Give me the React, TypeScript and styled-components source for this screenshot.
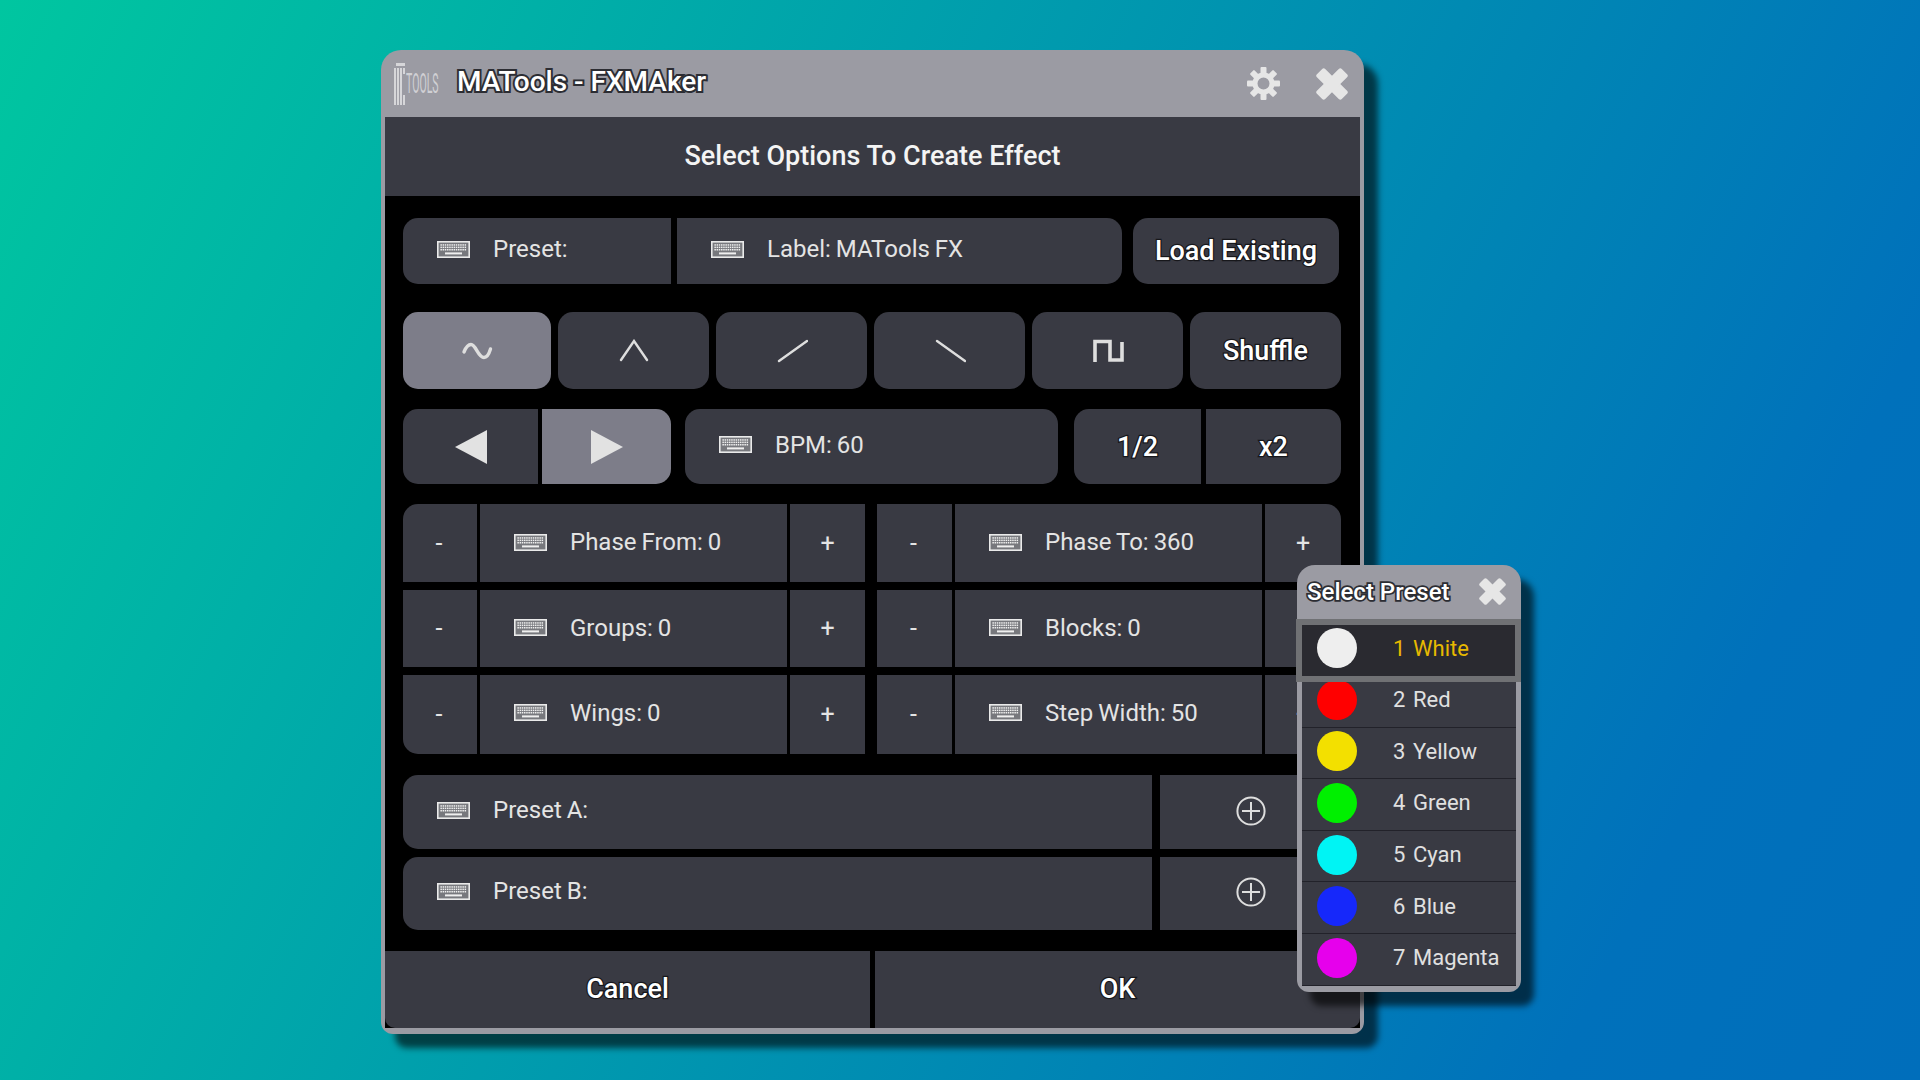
import React from "react";
import styled, { createGlobalStyle } from "styled-components";

const GlobalStyle = createGlobalStyle`
  html, body {
    margin: 0;
    padding: 0;
    width: 1920px;
    height: 1080px;
    overflow: hidden;
    font-family: Roboto, "Liberation Sans", sans-serif;
  }
`;

const PANEL = "#393a43";
const ACTIVE = "#7d7d89";
const FRAME = "#9b9ba3";
const LIGHT = "#e2e2e2";

const Keyboard = () => {
  const dots: React.ReactNode[] = [];
  for (let r = 0; r < 3; r++) {
    for (let c = 0; c < 12; c++) {
      dots.push(<rect key={r + "-" + c} x={3.4 + c * 2.2} y={3.2 + r * 2.4} width={1.5} height={1.5} fill="#efefef" />);
    }
  }
  return (
    <svg width="33" height="17" viewBox="0 0 33 17" style={{ flex: "none" }}>
      <rect x="0.8" y="0.8" width="31.4" height="15.4" fill="#77787d" stroke="#eaeaea" strokeWidth="1.6" />
      {dots}
      <rect x="8" y="11.4" width="17" height="2" fill="#efefef" />
    </svg>
  );
};

const LogoMark = styled.div`
  display: flex;
  align-items: center;
  width: 46px;
  height: 44px;
  flex: none;
`;

const LogoWord = styled.span`
  display: block;
  width: 32px;
  white-space: nowrap;
  font-size: 27px;
  line-height: 28px;
  color: #d0d0d4;
  transform: scaleX(0.39);
  transform-origin: left center;
`;

const Logo = () => (
  <LogoMark>
    <svg width="12" height="44" viewBox="0 0 12 44" style={{ flex: "none" }}>
      <g fill="#d6d6d9">
        <rect x="0" y="6" width="2" height="37" />
        <rect x="3" y="6" width="2" height="37" />
        <rect x="6" y="6" width="2" height="37" />
        <rect x="9" y="6" width="2" height="6" />
        <rect x="9" y="33" width="2" height="10" />
        <rect x="2" y="1" width="9" height="3" />
      </g>
    </svg>
    <LogoWord>TOOLS</LogoWord>
  </LogoMark>
);

const Gear = () => (
  <svg width="33" height="33" viewBox="0 0 33 33">
    <g fill="#e6e6e6">
      {[0, 45, 90, 135, 180, 225, 270, 315].map((a) => (
        <rect key={a} x="13.5" y="0" width="6" height="7" rx="1" transform={`rotate(${a} 16.5 16.5)`} />
      ))}
    </g>
    <circle cx="16.5" cy="16.5" r="8.5" fill="none" stroke="#e6e6e6" strokeWidth="5" />
  </svg>
);

const CloseX = ({ size }: { size: number }) => (
  <svg width={size} height={size} viewBox="0 0 30 30">
    <g fill="#e6e6e6">
      <rect x="-1.5" y="9.5" width="33" height="11" rx="2" transform="rotate(45 15 15)" />
      <rect x="-1.5" y="9.5" width="33" height="11" rx="2" transform="rotate(-45 15 15)" />
    </g>
  </svg>
);

const waves: Record<string, { d: string; w: number }> = {
  sine: { d: "M3 13C5 8 7 5.5 10 5.5C15 5.5 17 18.5 23 18.5C26 18.5 28 15 29.5 10", w: 3.4 },
  triangle: { d: "M3 21L16 2L29 21", w: 2.4 },
  up: { d: "M3 22L31 2", w: 2.4 },
  down: { d: "M3 2L31 22", w: 2.4 },
  square: { d: "M3 23V2.5H18V21H30V3", w: 3.6 },
};

const Wave = ({ kind }: { kind: string }) => (
  <svg width="32" height="24" viewBox="0 0 32 24" fill="none" stroke="#dedede" strokeWidth={waves[kind].w} strokeLinecap={kind === "square" ? "butt" : "round"}>
    <path d={waves[kind].d} />
  </svg>
);

const Arrow = ({ left }: { left?: boolean }) => (
  <svg width="32" height="34" viewBox="0 0 32 34">
    <polygon points={left ? "32,0 32,34 0,17" : "0,0 0,34 32,17"} fill={LIGHT} />
  </svg>
);

const PlusCircle = () => (
  <svg width="30" height="30" viewBox="0 0 30 30" fill="none" stroke="#dedede" strokeWidth="2">
    <circle cx="15" cy="15" r="13.6" />
    <path d="M15 6V24M6 15H24" />
  </svg>
);

const Stage = styled.div`
  position: relative;
  width: 1920px;
  height: 1080px;
  box-sizing: border-box;
  padding: 50px 0 0 381px;
  background: linear-gradient(116deg, #00c6a0 0%, #0071bb 85%, #006ebb 100%);
`;

const Window = styled.div`
  width: 983px;
  box-sizing: border-box;
  padding: 0 4px 6px;
  background: ${FRAME};
  border-radius: 20px 20px 12px 12px;
  box-shadow: 14px 14px 6px rgba(0, 0, 0, 0.6);
`;

const TitleBar = styled.div`
  height: 67px;
  display: flex;
  align-items: center;
  padding: 0 12px 0 9px;
`;

const WindowTitle = styled.div`
  margin-left: 17px;
  padding-bottom: 5px;
  flex: 1;
  font-size: 28px;
  font-weight: 500;
  color: #fff;
  -webkit-text-stroke: 4px #2c2d33;
  paint-order: stroke fill;
`;

const TitleIcons = styled.div`
  display: flex;
  align-items: center;
  gap: 36px;
`;

const Header = styled.div`
  height: 79px;
  box-sizing: border-box;
  padding-bottom: 2px;
  background: ${PANEL};
  display: flex;
  align-items: center;
  justify-content: center;
  color: #f4f4f4;
  font-size: 27px;
  font-weight: 500;
`;

const Body = styled.div`
  background: #000;
  padding: 22px 19px 21px 18px;
`;

const Row = styled.div<{ $h: number; $top?: number; $gap?: number }>`
  display: flex;
  height: ${(p) => p.$h}px;
  margin-top: ${(p) => p.$top || 0}px;
  gap: ${(p) => p.$gap || 0}px;
`;

const Cell = styled.div<{ $w?: number; $r?: string; $on?: boolean; $mr?: number; $pb?: number }>`
  flex: ${(p) => (p.$w ? "none" : 1)};
  width: ${(p) => (p.$w ? p.$w + "px" : "auto")};
  margin-right: ${(p) => p.$mr || 0}px;
  padding-bottom: ${(p) => p.$pb || 0}px;
  box-sizing: border-box;
  display: flex;
  align-items: center;
  justify-content: center;
  background: ${(p) => (p.$on ? ACTIVE : PANEL)};
  border-radius: ${(p) => p.$r || "0"};
`;

const Field = styled(Cell)`
  justify-content: flex-start;
  padding-left: 34px;
  gap: 23px;
  color: #e4e4e4;
  font-size: 24px;
  word-spacing: -1px;
`;

const Action = styled(Cell)`
  color: #fff;
  font-size: 27px;
  font-weight: 500;
  -webkit-text-stroke: 2.5px #17171b;
  paint-order: stroke fill;
`;

const Step = styled(Cell)`
  color: #e4e4e4;
  font-size: 25px;
`;

const Minus = styled(Step)`
  padding-right: 2px;
`;

const Footer = styled.div`
  display: flex;
  gap: 5px;
  background: #000;
`;

const FooterButton = styled(Action)`
  height: 77px;
`;

const Popup = styled.div`
  position: absolute;
  left: 1297px;
  top: 565px;
  width: 224px;
  box-sizing: border-box;
  padding: 0 5px 6px;
  background: ${FRAME};
  border-radius: 18px 18px 12px 12px;
  box-shadow: 13px 14px 6px rgba(0, 0, 0, 0.6);
`;

const PopupTitleBar = styled.div`
  height: 53px;
  display: flex;
  align-items: center;
  justify-content: space-between;
  padding: 0 10px 1px 5px;
`;

const PopupTitle = styled.div`
  font-size: 24px;
  font-weight: 500;
  color: #fff;
  -webkit-text-stroke: 3.5px #2c2d33;
  paint-order: stroke fill;
`;

const PresetRow = styled.div<{ $selected?: boolean }>`
  position: relative;
  display: flex;
  align-items: center;
  box-sizing: border-box;
  height: ${(p) => (p.$selected ? 63 : 51.6)}px;
  padding: 0 0 ${(p) => (p.$selected ? 5 : 3)}px 15px;
  background: ${(p) => (p.$selected ? "#2a2a30" : PANEL)};
  margin: ${(p) => (p.$selected ? "0 -5px -6px -6px" : "0")};
  z-index: ${(p) => (p.$selected ? 1 : 0)};
  border: ${(p) => (p.$selected ? "6px solid #707174" : "0")};
  border-bottom: ${(p) => (p.$selected ? "6px solid #707174" : "1.5px solid #22222a")};
  color: ${(p) => (p.$selected ? "#e7b900" : "#e0e0e0")};
  font-size: 22px;
`;

const Dot = styled.span<{ $color: string }>`
  width: 40px;
  height: 40px;
  flex: none;
  border-radius: 50%;
  background: ${(p) => p.$color};
`;

const PresetNumber = styled.span`
  width: 20px;
  margin-left: 36px;
  text-align: left;
`;

const params = [
  { h: 78, top: 20, pb: 2, left: "Phase From: 0", right: "Phase To: 360" },
  { h: 77, top: 8, pb: 2, left: "Groups: 0", right: "Blocks: 0" },
  { h: 79, top: 8, pb: 4, left: "Wings: 0", right: "Step Width: 50" },
];

const presets = [
  { n: 1, name: "White", color: "#eeeeee" },
  { n: 2, name: "Red", color: "#ff0000" },
  { n: 3, name: "Yellow", color: "#f3e000" },
  { n: 4, name: "Green", color: "#00f000" },
  { n: 5, name: "Cyan", color: "#00f4f4" },
  { n: 6, name: "Blue", color: "#1628fa" },
  { n: 7, name: "Magenta", color: "#e600ec" },
];

const App = () => {
  return (
    <Stage>
      <GlobalStyle />
      <Window>
        <TitleBar>
          <Logo />
          <WindowTitle>MATools - FXMAker</WindowTitle>
          <TitleIcons>
            <Gear />
            <CloseX size={32} />
          </TitleIcons>
        </TitleBar>
        <Header>Select Options To Create Effect</Header>
        <Body>
          <Row $h={66}>
            <Field $w={268} $r="15px 0 0 15px" $mr={6} $pb={4}>
              <Keyboard />
              Preset:
            </Field>
            <Field $w={445} $r="0 15px 15px 0" $mr={11} $pb={4}>
              <Keyboard />
              Label: MATools FX
            </Field>
            <Action $w={206} $r="15px">
              Load Existing
            </Action>
          </Row>

          <Row $h={77} $top={28} $gap={7}>
            <Cell $w={148} $r="15px" $on>
              <Wave kind="sine" />
            </Cell>
            <Cell $w={151} $r="15px">
              <Wave kind="triangle" />
            </Cell>
            <Cell $w={151} $r="15px">
              <Wave kind="up" />
            </Cell>
            <Cell $w={151} $r="15px">
              <Wave kind="down" />
            </Cell>
            <Cell $w={151} $r="15px">
              <Wave kind="square" />
            </Cell>
            <Action $r="15px">Shuffle</Action>
          </Row>

          <Row $h={75} $top={20}>
            <Cell $w={135} $r="15px 0 0 15px" $mr={4}>
              <Arrow left />
            </Cell>
            <Cell $w={129} $r="0 15px 15px 0" $on $mr={14}>
              <Arrow />
            </Cell>
            <Field $w={373} $r="15px" $mr={16} $pb={4}>
              <Keyboard />
              BPM: 60
            </Field>
            <Action $w={127} $r="15px 0 0 15px" $mr={5}>
              1/2
            </Action>
            <Action $r="0 15px 15px 0">x2</Action>
          </Row>

          {params.map((p, i) => (
            <Row key={p.left} $h={p.h} $top={p.top}>
              <Minus $w={74} $r={i === 0 ? "15px 0 0 0" : i === 2 ? "0 0 0 15px" : "0"} $mr={3}>
                -
              </Minus>
              <Field $w={307} $mr={3} $pb={p.pb}>
                <Keyboard />
                {p.left}
              </Field>
              <Step $w={75} $mr={12}>
                +
              </Step>
              <Minus $w={75} $mr={3}>
                -
              </Minus>
              <Field $w={307} $mr={3} $pb={p.pb}>
                <Keyboard />
                {p.right}
              </Field>
              <Step $r={i === 0 ? "0 15px 0 0" : i === 2 ? "0 0 15px 0" : "0"}>+</Step>
            </Row>
          ))}

          {["Preset A:", "Preset B:"].map((label, i) => (
            <Row key={label} $h={i === 0 ? 74 : 73} $top={i === 0 ? 21 : 8}>
              <Field $w={749} $r="15px 0 0 15px" $mr={8} $pb={i === 0 ? 4 : 5}>
                <Keyboard />
                {label}
              </Field>
              <Cell $r="0 15px 15px 0" $pb={i === 0 ? 2 : 4}>
                <PlusCircle />
              </Cell>
            </Row>
          ))}
        </Body>
        <Footer>
          <FooterButton $r="0 0 0 10px" $pb={2}>
            Cancel
          </FooterButton>
          <FooterButton $r="0 0 10px 0" $pb={2}>
            OK
          </FooterButton>
        </Footer>
      </Window>

      <Popup>
        <PopupTitleBar>
          <PopupTitle>Select Preset</PopupTitle>
          <CloseX size={27} />
        </PopupTitleBar>
        {presets.map((p) => (
          <PresetRow key={p.n} $selected={p.n === 1}>
            <Dot $color={p.color} />
            <PresetNumber>{p.n}</PresetNumber>
            {p.name}
          </PresetRow>
        ))}
      </Popup>
    </Stage>
  );
};

export default App;
